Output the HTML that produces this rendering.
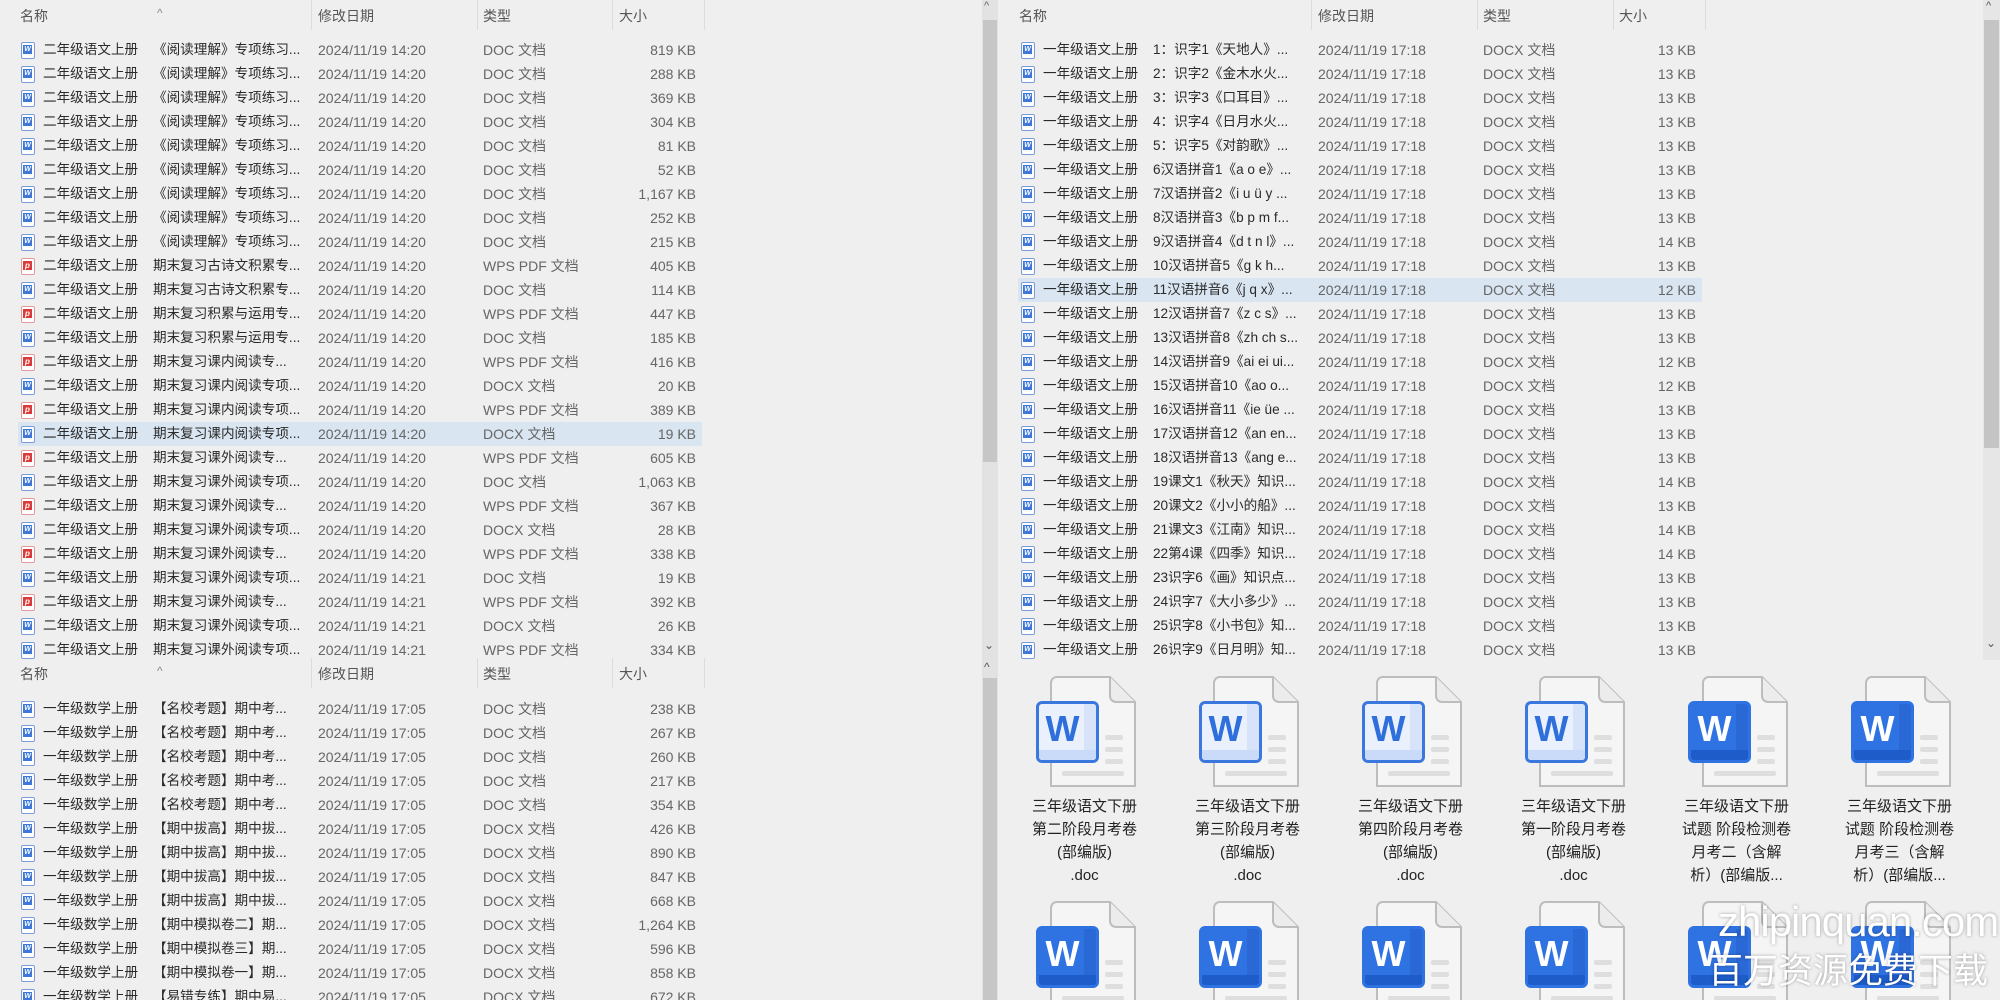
<!DOCTYPE html>
<html><head><meta charset="utf-8"><style>
*{margin:0;padding:0;box-sizing:border-box}
body{width:2000px;height:1000px;overflow:hidden;background:#efefef;font-family:"Liberation Sans","Noto Sans CJK SC",sans-serif;position:relative;color:#222}
.pane{position:absolute;overflow:hidden}
.hd{position:absolute;left:0;top:0;height:30px;width:720px;font-size:14px;color:#555}
.hd span{position:absolute;top:6px}
.hd b{position:absolute;top:0;width:1px;height:30px;background:#dcdcdc}
.car{position:absolute;top:-6px;left:157px;font-size:12px;color:#888}
.r{position:absolute;left:0;width:720px;height:24px;line-height:24px;font-size:14px;white-space:nowrap;margin-top:2px}
.r.sel::before{content:"";position:absolute;left:18px;top:0;width:684px;height:24px;background:#d9e5f1}
.r span{position:absolute;top:0}
.n1{left:43px;color:#2a2a2a;font-size:13.6px}.n2{left:153px;color:#2a2a2a;font-size:13.6px}.d{left:318px;color:#666}.t{left:483px;color:#666}.s{left:596px;width:100px;text-align:right;color:#666}
.ic{position:absolute;left:21px;top:4px;width:14px;height:17px;border:1.5px solid #7a9ad8;border-radius:2px;background:#fff}
.ic::after{content:"W";position:absolute;left:1px;top:2px;width:9px;height:9px;background:#3f77d8;color:#fff;font-size:7px;line-height:9px;text-align:center;font-weight:bold}
.ic.p{border-color:#e59a9a}
.ic.p::after{content:"p";background:#d93b3b;font-size:8px}
.big{position:absolute;width:163px;text-align:center}
.pg{position:absolute;left:47px;top:0}
.wb{position:absolute;left:33px;top:25px;width:63px;height:62px;border-radius:6px;border:3px solid #3a78e0;background:#eaf1fd;color:#2f6fdc;font-size:36px;font-weight:bold;line-height:50px;text-align:center;overflow:hidden;padding-right:10px}
.wb::before{content:"";position:absolute;right:0;top:0;bottom:0;width:12px;background:#d6e3f8}
.wb::after{content:"";position:absolute;left:0;right:0;bottom:0;height:10px;background:#c9dbf8}
.wb.dk{background:#2f73e3;color:#fff;border-color:#2f73e3}
.wb.dk::before{background:#2a68d6}
.wb.dk::after{background:#1d5cc9}
.cap{position:absolute;top:119px;left:0;width:163px;font-size:15px;line-height:23px;color:#222}
</style></head><body>
<svg width="0" height="0" style="position:absolute"><defs><g id="pg"><path d="M6,1 H60 L85,26 V110 H1 V7 A6,6 0 0 1 6,1Z" fill="#f5f5f5" stroke="#bdbdbd" stroke-width="2"/><path d="M60,1 V20 A6,6 0 0 0 66,26 H85" fill="#ececec" stroke="#bdbdbd" stroke-width="2"/><rect x="55" y="59" width="18" height="5" rx="2" fill="#dedede"/><rect x="55" y="71" width="18" height="5" rx="2" fill="#dedede"/><rect x="55" y="83" width="18" height="5" rx="2" fill="#dedede"/><rect x="12" y="95" width="62" height="5" rx="2" fill="#dedede"/></g></defs></svg>

<!-- left top pane -->
<div class="pane" style="left:0;top:0;width:982px;height:660px">
<div class="hd"><span style="left:20px">名称</span><span class="car">^</span><b style="left:311px"></b><span style="left:318px">修改日期</span><b style="left:477px"></b><span style="left:483px">类型</span><b style="left:612px"></b><span style="left:619px">大小</span><b style="left:704px"></b></div>
<div class="r" style="top:36px"><i class="ic"></i><span class="n1">二年级语文上册</span><span class="n2">《阅读理解》专项练习...</span><span class="d">2024/11/19 14:20</span><span class="t">DOC 文档</span><span class="s">819 KB</span></div>
<div class="r" style="top:60px"><i class="ic"></i><span class="n1">二年级语文上册</span><span class="n2">《阅读理解》专项练习...</span><span class="d">2024/11/19 14:20</span><span class="t">DOC 文档</span><span class="s">288 KB</span></div>
<div class="r" style="top:84px"><i class="ic"></i><span class="n1">二年级语文上册</span><span class="n2">《阅读理解》专项练习...</span><span class="d">2024/11/19 14:20</span><span class="t">DOC 文档</span><span class="s">369 KB</span></div>
<div class="r" style="top:108px"><i class="ic"></i><span class="n1">二年级语文上册</span><span class="n2">《阅读理解》专项练习...</span><span class="d">2024/11/19 14:20</span><span class="t">DOC 文档</span><span class="s">304 KB</span></div>
<div class="r" style="top:132px"><i class="ic"></i><span class="n1">二年级语文上册</span><span class="n2">《阅读理解》专项练习...</span><span class="d">2024/11/19 14:20</span><span class="t">DOC 文档</span><span class="s">81 KB</span></div>
<div class="r" style="top:156px"><i class="ic"></i><span class="n1">二年级语文上册</span><span class="n2">《阅读理解》专项练习...</span><span class="d">2024/11/19 14:20</span><span class="t">DOC 文档</span><span class="s">52 KB</span></div>
<div class="r" style="top:180px"><i class="ic"></i><span class="n1">二年级语文上册</span><span class="n2">《阅读理解》专项练习...</span><span class="d">2024/11/19 14:20</span><span class="t">DOC 文档</span><span class="s">1,167 KB</span></div>
<div class="r" style="top:204px"><i class="ic"></i><span class="n1">二年级语文上册</span><span class="n2">《阅读理解》专项练习...</span><span class="d">2024/11/19 14:20</span><span class="t">DOC 文档</span><span class="s">252 KB</span></div>
<div class="r" style="top:228px"><i class="ic"></i><span class="n1">二年级语文上册</span><span class="n2">《阅读理解》专项练习...</span><span class="d">2024/11/19 14:20</span><span class="t">DOC 文档</span><span class="s">215 KB</span></div>
<div class="r" style="top:252px"><i class="ic p"></i><span class="n1">二年级语文上册</span><span class="n2">期末复习古诗文积累专...</span><span class="d">2024/11/19 14:20</span><span class="t">WPS PDF 文档</span><span class="s">405 KB</span></div>
<div class="r" style="top:276px"><i class="ic"></i><span class="n1">二年级语文上册</span><span class="n2">期末复习古诗文积累专...</span><span class="d">2024/11/19 14:20</span><span class="t">DOC 文档</span><span class="s">114 KB</span></div>
<div class="r" style="top:300px"><i class="ic p"></i><span class="n1">二年级语文上册</span><span class="n2">期末复习积累与运用专...</span><span class="d">2024/11/19 14:20</span><span class="t">WPS PDF 文档</span><span class="s">447 KB</span></div>
<div class="r" style="top:324px"><i class="ic"></i><span class="n1">二年级语文上册</span><span class="n2">期末复习积累与运用专...</span><span class="d">2024/11/19 14:20</span><span class="t">DOC 文档</span><span class="s">185 KB</span></div>
<div class="r" style="top:348px"><i class="ic p"></i><span class="n1">二年级语文上册</span><span class="n2">期末复习课内阅读专...</span><span class="d">2024/11/19 14:20</span><span class="t">WPS PDF 文档</span><span class="s">416 KB</span></div>
<div class="r" style="top:372px"><i class="ic"></i><span class="n1">二年级语文上册</span><span class="n2">期末复习课内阅读专项...</span><span class="d">2024/11/19 14:20</span><span class="t">DOCX 文档</span><span class="s">20 KB</span></div>
<div class="r" style="top:396px"><i class="ic p"></i><span class="n1">二年级语文上册</span><span class="n2">期末复习课内阅读专项...</span><span class="d">2024/11/19 14:20</span><span class="t">WPS PDF 文档</span><span class="s">389 KB</span></div>
<div class="r sel" style="top:420px"><i class="ic"></i><span class="n1">二年级语文上册</span><span class="n2">期末复习课内阅读专项...</span><span class="d">2024/11/19 14:20</span><span class="t">DOCX 文档</span><span class="s">19 KB</span></div>
<div class="r" style="top:444px"><i class="ic p"></i><span class="n1">二年级语文上册</span><span class="n2">期末复习课外阅读专...</span><span class="d">2024/11/19 14:20</span><span class="t">WPS PDF 文档</span><span class="s">605 KB</span></div>
<div class="r" style="top:468px"><i class="ic"></i><span class="n1">二年级语文上册</span><span class="n2">期末复习课外阅读专项...</span><span class="d">2024/11/19 14:20</span><span class="t">DOC 文档</span><span class="s">1,063 KB</span></div>
<div class="r" style="top:492px"><i class="ic p"></i><span class="n1">二年级语文上册</span><span class="n2">期末复习课外阅读专...</span><span class="d">2024/11/19 14:20</span><span class="t">WPS PDF 文档</span><span class="s">367 KB</span></div>
<div class="r" style="top:516px"><i class="ic"></i><span class="n1">二年级语文上册</span><span class="n2">期末复习课外阅读专项...</span><span class="d">2024/11/19 14:20</span><span class="t">DOCX 文档</span><span class="s">28 KB</span></div>
<div class="r" style="top:540px"><i class="ic p"></i><span class="n1">二年级语文上册</span><span class="n2">期末复习课外阅读专...</span><span class="d">2024/11/19 14:20</span><span class="t">WPS PDF 文档</span><span class="s">338 KB</span></div>
<div class="r" style="top:564px"><i class="ic"></i><span class="n1">二年级语文上册</span><span class="n2">期末复习课外阅读专项...</span><span class="d">2024/11/19 14:21</span><span class="t">DOC 文档</span><span class="s">19 KB</span></div>
<div class="r" style="top:588px"><i class="ic p"></i><span class="n1">二年级语文上册</span><span class="n2">期末复习课外阅读专...</span><span class="d">2024/11/19 14:21</span><span class="t">WPS PDF 文档</span><span class="s">392 KB</span></div>
<div class="r" style="top:612px"><i class="ic"></i><span class="n1">二年级语文上册</span><span class="n2">期末复习课外阅读专项...</span><span class="d">2024/11/19 14:21</span><span class="t">DOCX 文档</span><span class="s">26 KB</span></div>
<div class="r" style="top:636px"><i class="ic"></i><span class="n1">二年级语文上册</span><span class="n2">期末复习课外阅读专项...</span><span class="d">2024/11/19 14:21</span><span class="t">WPS PDF 文档</span><span class="s">334 KB</span></div>
</div>

<!-- left bottom pane -->
<div class="pane" style="left:0;top:658px;width:982px;height:342px">
<div class="hd"><span style="left:20px">名称</span><span class="car">^</span><b style="left:311px"></b><span style="left:318px">修改日期</span><b style="left:477px"></b><span style="left:483px">类型</span><b style="left:612px"></b><span style="left:619px">大小</span><b style="left:704px"></b></div>
<div class="r" style="top:37px"><i class="ic"></i><span class="n1">一年级数学上册</span><span class="n2">【名校考题】期中考...</span><span class="d">2024/11/19 17:05</span><span class="t">DOC 文档</span><span class="s">238 KB</span></div>
<div class="r" style="top:61px"><i class="ic"></i><span class="n1">一年级数学上册</span><span class="n2">【名校考题】期中考...</span><span class="d">2024/11/19 17:05</span><span class="t">DOC 文档</span><span class="s">267 KB</span></div>
<div class="r" style="top:85px"><i class="ic"></i><span class="n1">一年级数学上册</span><span class="n2">【名校考题】期中考...</span><span class="d">2024/11/19 17:05</span><span class="t">DOC 文档</span><span class="s">260 KB</span></div>
<div class="r" style="top:109px"><i class="ic"></i><span class="n1">一年级数学上册</span><span class="n2">【名校考题】期中考...</span><span class="d">2024/11/19 17:05</span><span class="t">DOC 文档</span><span class="s">217 KB</span></div>
<div class="r" style="top:133px"><i class="ic"></i><span class="n1">一年级数学上册</span><span class="n2">【名校考题】期中考...</span><span class="d">2024/11/19 17:05</span><span class="t">DOC 文档</span><span class="s">354 KB</span></div>
<div class="r" style="top:157px"><i class="ic"></i><span class="n1">一年级数学上册</span><span class="n2">【期中拔高】期中拔...</span><span class="d">2024/11/19 17:05</span><span class="t">DOCX 文档</span><span class="s">426 KB</span></div>
<div class="r" style="top:181px"><i class="ic"></i><span class="n1">一年级数学上册</span><span class="n2">【期中拔高】期中拔...</span><span class="d">2024/11/19 17:05</span><span class="t">DOCX 文档</span><span class="s">890 KB</span></div>
<div class="r" style="top:205px"><i class="ic"></i><span class="n1">一年级数学上册</span><span class="n2">【期中拔高】期中拔...</span><span class="d">2024/11/19 17:05</span><span class="t">DOCX 文档</span><span class="s">847 KB</span></div>
<div class="r" style="top:229px"><i class="ic"></i><span class="n1">一年级数学上册</span><span class="n2">【期中拔高】期中拔...</span><span class="d">2024/11/19 17:05</span><span class="t">DOCX 文档</span><span class="s">668 KB</span></div>
<div class="r" style="top:253px"><i class="ic"></i><span class="n1">一年级数学上册</span><span class="n2">【期中模拟卷二】期...</span><span class="d">2024/11/19 17:05</span><span class="t">DOCX 文档</span><span class="s">1,264 KB</span></div>
<div class="r" style="top:277px"><i class="ic"></i><span class="n1">一年级数学上册</span><span class="n2">【期中模拟卷三】期...</span><span class="d">2024/11/19 17:05</span><span class="t">DOCX 文档</span><span class="s">596 KB</span></div>
<div class="r" style="top:301px"><i class="ic"></i><span class="n1">一年级数学上册</span><span class="n2">【期中模拟卷一】期...</span><span class="d">2024/11/19 17:05</span><span class="t">DOCX 文档</span><span class="s">858 KB</span></div>
<div class="r" style="top:325px"><i class="ic"></i><span class="n1">一年级数学上册</span><span class="n2">【易错专练】期中易...</span><span class="d">2024/11/19 17:05</span><span class="t">DOCX 文档</span><span class="s">672 KB</span></div>
</div>

<!-- middle scrollbar -->
<div style="position:absolute;left:982px;top:0;width:16px;height:1000px;background:#e2e2e2"></div>
<div style="position:absolute;left:983px;top:20px;width:14px;height:442px;background:#c6c6c6"></div>
<div style="position:absolute;left:984px;top:0;font-size:11px;color:#666">^</div>
<div style="position:absolute;left:984px;top:638px;font-size:12px;color:#555">&#8964;</div>
<div style="position:absolute;left:984px;top:660px;font-size:12px;color:#555">^</div>
<div style="position:absolute;left:983px;top:678px;width:14px;height:322px;background:#c6c6c6"></div>

<!-- right top pane -->
<div class="pane" style="left:1000px;top:0;width:983px;height:662px">
<div class="hd"><span style="left:19px">名称</span><b style="left:311px"></b><span style="left:318px">修改日期</span><b style="left:477px"></b><span style="left:483px">类型</span><b style="left:613px"></b><span style="left:619px">大小</span><b style="left:705px"></b></div>
<div class="r" style="top:36px"><i class="ic"></i><span class="n1">一年级语文上册</span><span class="n2">1：识字1《天地人》...</span><span class="d">2024/11/19 17:18</span><span class="t">DOCX 文档</span><span class="s">13 KB</span></div>
<div class="r" style="top:60px"><i class="ic"></i><span class="n1">一年级语文上册</span><span class="n2">2：识字2《金木水火...</span><span class="d">2024/11/19 17:18</span><span class="t">DOCX 文档</span><span class="s">13 KB</span></div>
<div class="r" style="top:84px"><i class="ic"></i><span class="n1">一年级语文上册</span><span class="n2">3：识字3《口耳目》...</span><span class="d">2024/11/19 17:18</span><span class="t">DOCX 文档</span><span class="s">13 KB</span></div>
<div class="r" style="top:108px"><i class="ic"></i><span class="n1">一年级语文上册</span><span class="n2">4：识字4《日月水火...</span><span class="d">2024/11/19 17:18</span><span class="t">DOCX 文档</span><span class="s">13 KB</span></div>
<div class="r" style="top:132px"><i class="ic"></i><span class="n1">一年级语文上册</span><span class="n2">5：识字5《对韵歌》...</span><span class="d">2024/11/19 17:18</span><span class="t">DOCX 文档</span><span class="s">13 KB</span></div>
<div class="r" style="top:156px"><i class="ic"></i><span class="n1">一年级语文上册</span><span class="n2">6汉语拼音1《a o e》...</span><span class="d">2024/11/19 17:18</span><span class="t">DOCX 文档</span><span class="s">13 KB</span></div>
<div class="r" style="top:180px"><i class="ic"></i><span class="n1">一年级语文上册</span><span class="n2">7汉语拼音2《i u ü y ...</span><span class="d">2024/11/19 17:18</span><span class="t">DOCX 文档</span><span class="s">13 KB</span></div>
<div class="r" style="top:204px"><i class="ic"></i><span class="n1">一年级语文上册</span><span class="n2">8汉语拼音3《b p m f...</span><span class="d">2024/11/19 17:18</span><span class="t">DOCX 文档</span><span class="s">13 KB</span></div>
<div class="r" style="top:228px"><i class="ic"></i><span class="n1">一年级语文上册</span><span class="n2">9汉语拼音4《d t n l》...</span><span class="d">2024/11/19 17:18</span><span class="t">DOCX 文档</span><span class="s">14 KB</span></div>
<div class="r" style="top:252px"><i class="ic"></i><span class="n1">一年级语文上册</span><span class="n2">10汉语拼音5《g k h...</span><span class="d">2024/11/19 17:18</span><span class="t">DOCX 文档</span><span class="s">13 KB</span></div>
<div class="r sel" style="top:276px"><i class="ic"></i><span class="n1">一年级语文上册</span><span class="n2">11汉语拼音6《j q x》...</span><span class="d">2024/11/19 17:18</span><span class="t">DOCX 文档</span><span class="s">12 KB</span></div>
<div class="r" style="top:300px"><i class="ic"></i><span class="n1">一年级语文上册</span><span class="n2">12汉语拼音7《z c s》...</span><span class="d">2024/11/19 17:18</span><span class="t">DOCX 文档</span><span class="s">13 KB</span></div>
<div class="r" style="top:324px"><i class="ic"></i><span class="n1">一年级语文上册</span><span class="n2">13汉语拼音8《zh ch s...</span><span class="d">2024/11/19 17:18</span><span class="t">DOCX 文档</span><span class="s">13 KB</span></div>
<div class="r" style="top:348px"><i class="ic"></i><span class="n1">一年级语文上册</span><span class="n2">14汉语拼音9《ai ei ui...</span><span class="d">2024/11/19 17:18</span><span class="t">DOCX 文档</span><span class="s">12 KB</span></div>
<div class="r" style="top:372px"><i class="ic"></i><span class="n1">一年级语文上册</span><span class="n2">15汉语拼音10《ao o...</span><span class="d">2024/11/19 17:18</span><span class="t">DOCX 文档</span><span class="s">12 KB</span></div>
<div class="r" style="top:396px"><i class="ic"></i><span class="n1">一年级语文上册</span><span class="n2">16汉语拼音11《ie üe ...</span><span class="d">2024/11/19 17:18</span><span class="t">DOCX 文档</span><span class="s">13 KB</span></div>
<div class="r" style="top:420px"><i class="ic"></i><span class="n1">一年级语文上册</span><span class="n2">17汉语拼音12《an en...</span><span class="d">2024/11/19 17:18</span><span class="t">DOCX 文档</span><span class="s">13 KB</span></div>
<div class="r" style="top:444px"><i class="ic"></i><span class="n1">一年级语文上册</span><span class="n2">18汉语拼音13《ang e...</span><span class="d">2024/11/19 17:18</span><span class="t">DOCX 文档</span><span class="s">13 KB</span></div>
<div class="r" style="top:468px"><i class="ic"></i><span class="n1">一年级语文上册</span><span class="n2">19课文1《秋天》知识...</span><span class="d">2024/11/19 17:18</span><span class="t">DOCX 文档</span><span class="s">14 KB</span></div>
<div class="r" style="top:492px"><i class="ic"></i><span class="n1">一年级语文上册</span><span class="n2">20课文2《小小的船》...</span><span class="d">2024/11/19 17:18</span><span class="t">DOCX 文档</span><span class="s">13 KB</span></div>
<div class="r" style="top:516px"><i class="ic"></i><span class="n1">一年级语文上册</span><span class="n2">21课文3《江南》知识...</span><span class="d">2024/11/19 17:18</span><span class="t">DOCX 文档</span><span class="s">14 KB</span></div>
<div class="r" style="top:540px"><i class="ic"></i><span class="n1">一年级语文上册</span><span class="n2">22第4课《四季》知识...</span><span class="d">2024/11/19 17:18</span><span class="t">DOCX 文档</span><span class="s">14 KB</span></div>
<div class="r" style="top:564px"><i class="ic"></i><span class="n1">一年级语文上册</span><span class="n2">23识字6《画》知识点...</span><span class="d">2024/11/19 17:18</span><span class="t">DOCX 文档</span><span class="s">13 KB</span></div>
<div class="r" style="top:588px"><i class="ic"></i><span class="n1">一年级语文上册</span><span class="n2">24识字7《大小多少》...</span><span class="d">2024/11/19 17:18</span><span class="t">DOCX 文档</span><span class="s">13 KB</span></div>
<div class="r" style="top:612px"><i class="ic"></i><span class="n1">一年级语文上册</span><span class="n2">25识字8《小书包》知...</span><span class="d">2024/11/19 17:18</span><span class="t">DOCX 文档</span><span class="s">13 KB</span></div>
<div class="r" style="top:636px"><i class="ic"></i><span class="n1">一年级语文上册</span><span class="n2">26识字9《日月明》知...</span><span class="d">2024/11/19 17:18</span><span class="t">DOCX 文档</span><span class="s">13 KB</span></div>
</div>

<!-- right scrollbar -->
<div style="position:absolute;left:1983px;top:0;width:17px;height:660px;background:#e6e6e6"></div>
<div style="position:absolute;left:1984px;top:20px;width:15px;height:428px;background:#c4c4c4"></div>
<div style="position:absolute;left:1986px;top:0;font-size:11px;color:#555">^</div>
<div style="position:absolute;left:1986px;top:636px;font-size:12px;color:#555">&#8964;</div>

<!-- big icon grid -->
<div class="pane" style="left:1000px;top:676px;width:983px;height:324px">
<div class="big" style="left:3px;top:0"><svg class="pg" width="88" height="112"><use href="#pg"/></svg><div class="wb">W</div><div class="cap">三年级语文下册<br>第二阶段月考卷<br>(部编版)<br>.doc</div></div>
<div class="big" style="left:166px;top:0"><svg class="pg" width="88" height="112"><use href="#pg"/></svg><div class="wb">W</div><div class="cap">三年级语文下册<br>第三阶段月考卷<br>(部编版)<br>.doc</div></div>
<div class="big" style="left:329px;top:0"><svg class="pg" width="88" height="112"><use href="#pg"/></svg><div class="wb">W</div><div class="cap">三年级语文下册<br>第四阶段月考卷<br>(部编版)<br>.doc</div></div>
<div class="big" style="left:492px;top:0"><svg class="pg" width="88" height="112"><use href="#pg"/></svg><div class="wb">W</div><div class="cap">三年级语文下册<br>第一阶段月考卷<br>(部编版)<br>.doc</div></div>
<div class="big" style="left:655px;top:0"><svg class="pg" width="88" height="112"><use href="#pg"/></svg><div class="wb dk">W</div><div class="cap">三年级语文下册<br>试题 阶段检测卷<br>月考二（含解<br>析）(部编版...</div></div>
<div class="big" style="left:818px;top:0"><svg class="pg" width="88" height="112"><use href="#pg"/></svg><div class="wb dk">W</div><div class="cap">三年级语文下册<br>试题 阶段检测卷<br>月考三（含解<br>析）(部编版...</div></div>
<div class="big" style="left:3px;top:225px"><svg class="pg" width="88" height="112"><use href="#pg"/></svg><div class="wb dk">W</div></div>
<div class="big" style="left:166px;top:225px"><svg class="pg" width="88" height="112"><use href="#pg"/></svg><div class="wb dk">W</div></div>
<div class="big" style="left:329px;top:225px"><svg class="pg" width="88" height="112"><use href="#pg"/></svg><div class="wb dk">W</div></div>
<div class="big" style="left:492px;top:225px"><svg class="pg" width="88" height="112"><use href="#pg"/></svg><div class="wb dk">W</div></div>
<div class="big" style="left:655px;top:225px"><svg class="pg" width="88" height="112"><use href="#pg"/></svg><div class="wb dk">W</div></div>
<div class="big" style="left:818px;top:225px"><svg class="pg" width="88" height="112"><use href="#pg"/></svg><div class="wb dk">W</div></div>
</div>

<!-- watermark -->
<div style="position:absolute;left:1718px;top:898px;font-size:42px;color:#fff;text-shadow:0 0 3px rgba(0,0,0,.35);letter-spacing:-1px;font-family:'Liberation Sans',sans-serif">zhipinquan.com</div>
<div style="position:absolute;left:1708px;top:950px;font-size:35px;color:#fff;text-shadow:0 0 3px rgba(0,0,0,.35);font-family:'Liberation Sans','Noto Sans CJK SC',sans-serif;line-height:44px">百万资源免费下载</div>
</body></html>
